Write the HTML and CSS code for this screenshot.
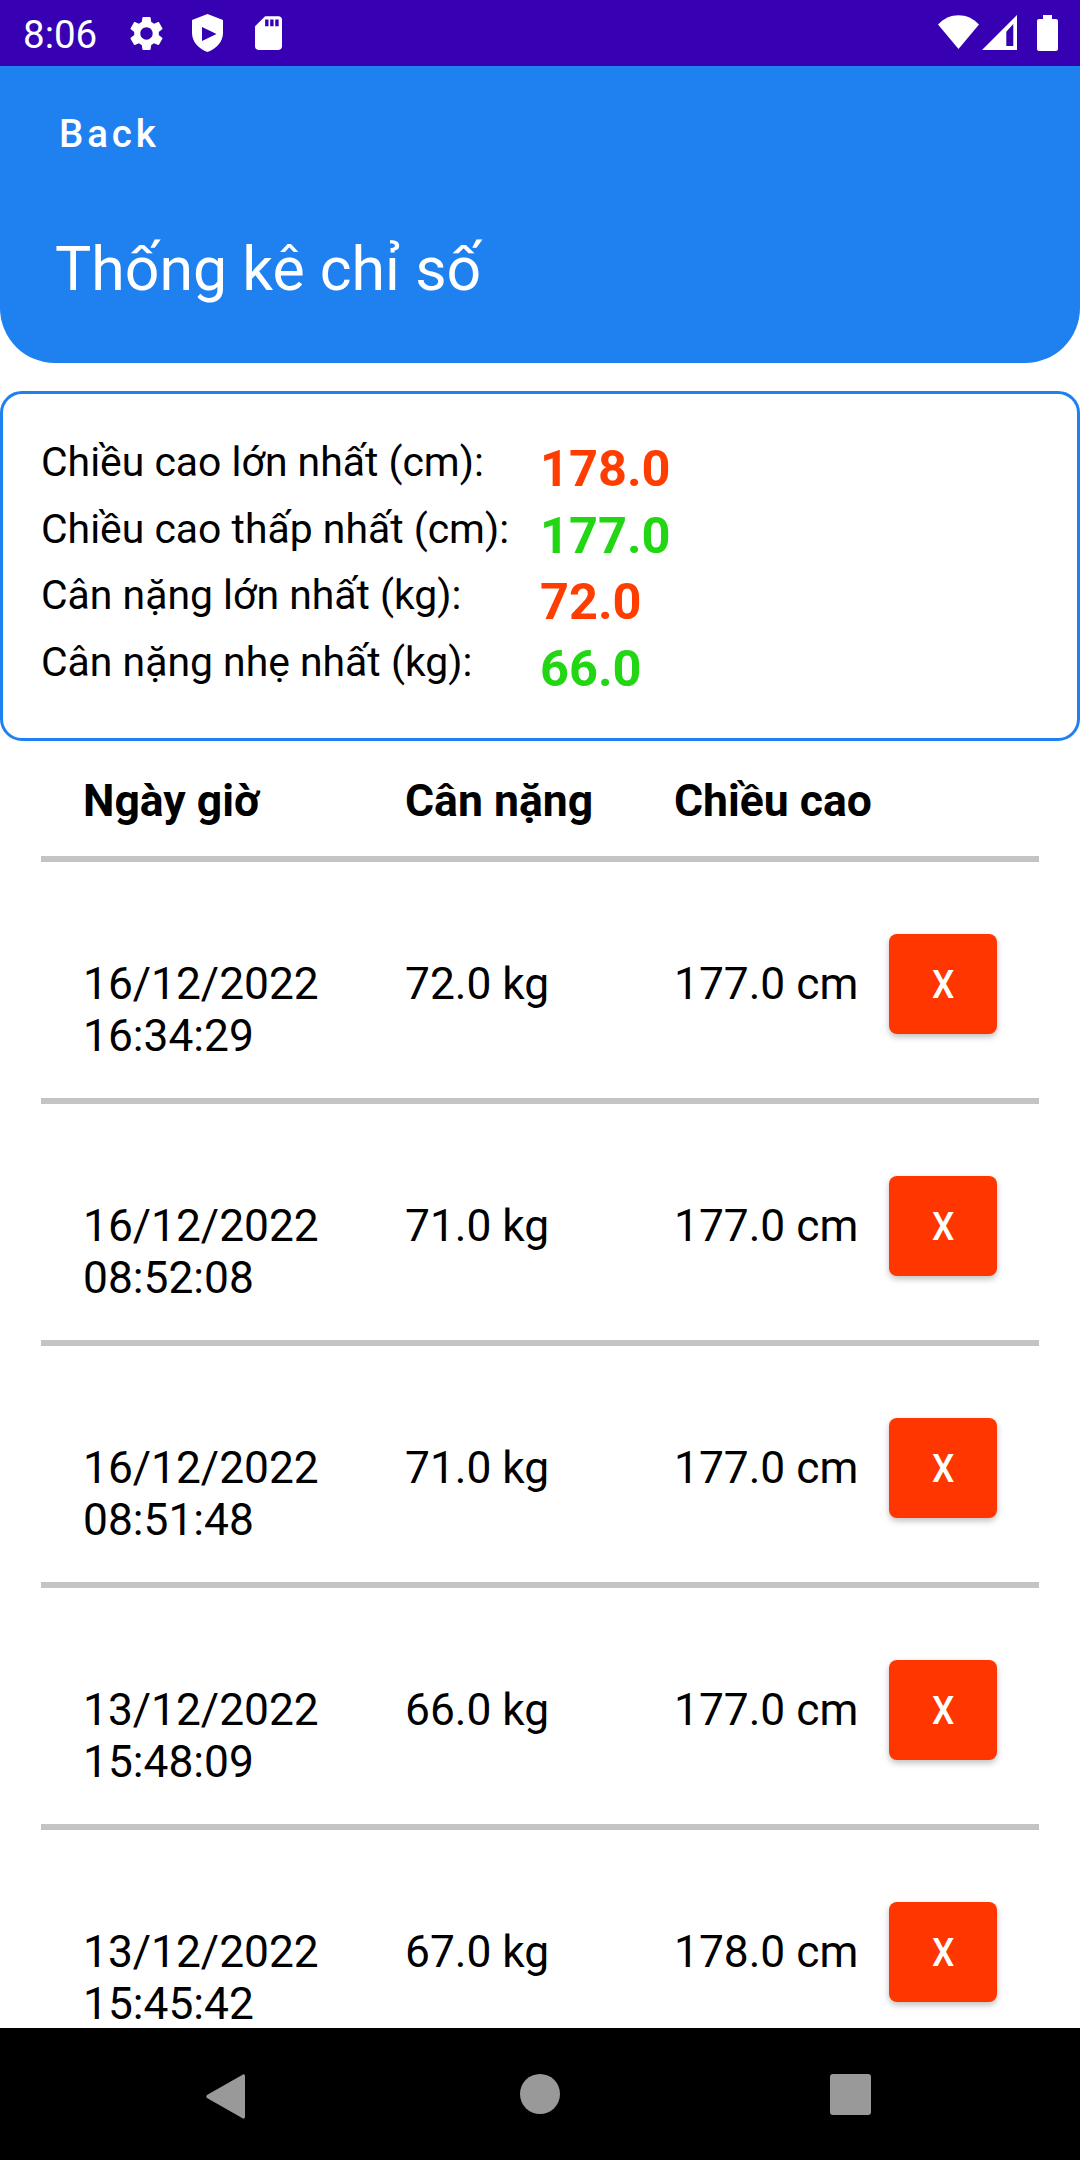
FILE: index.html
```html
<!DOCTYPE html>
<html lang="vi">
<head>
<meta charset="utf-8">
<title>Thống kê chỉ số</title>
<link rel="stylesheet" href="styles.css">
</head>
<body>
<div class="phone">
  <div class="status">
    <span class="time">8:06</span>
    <svg class="ic-gear" viewBox="2.5 1.8 19 20.4"><path d="M19.14 12.94c.04-.3.06-.61.06-.94 0-.32-.02-.64-.07-.94l2.03-1.58c.18-.14.23-.41.12-.61l-1.92-3.32c-.12-.22-.37-.29-.59-.22l-2.39.96c-.5-.38-1.03-.7-1.62-.94l-.36-2.54c-.04-.24-.24-.41-.48-.41h-3.84c-.24 0-.43.17-.47.41l-.36 2.54c-.59.24-1.13.57-1.62.94l-2.39-.96c-.22-.08-.47 0-.59.22L2.74 8.87c-.12.21-.08.47.12.61l2.03 1.58c-.05.3-.09.63-.09.94s.02.64.07.94l-2.03 1.58c-.18.14-.23.41-.12.61l1.92 3.32c.12.22.37.29.59.22l2.39-.96c.5.38 1.03.7 1.62.94l.36 2.54c.05.24.24.41.48.41h3.84c.24 0 .44-.17.47-.41l.36-2.54c.59-.24 1.13-.56 1.62-.94l2.39.96c.22.08.47 0 .59-.22l1.92-3.32c.12-.22.07-.47-.12-.61l-2.01-1.58zM12 15.6c-1.98 0-3.6-1.62-3.6-3.6s1.62-3.6 3.6-3.6 3.6 1.62 3.6 3.6-1.62 3.6-3.6 3.6z"/></svg>
    <svg class="ic-shield" viewBox="0 0 31 38"><path fill-rule="evenodd" d="M15.5 0 L31 6 V19 C31 28 24 35 15.5 38 C7 35 0 28 0 19 V6 Z M10 13 V27 L24.5 20 Z"/></svg>
    <svg class="ic-sd" viewBox="4 2 16 20"><path d="M18 2h-8L4.02 8 4 20c0 1.1.9 2 2 2h12c1.1 0 2-.9 2-2V4c0-1.1-.9-2-2-2zm-6 6h-2V4h2v4zm3 0h-2V4h2v4zm3 0h-2V4h2v4z"/></svg>
    <span class="status-space"></span>
    <svg class="ic-wifi" viewBox="0 0 41 34"><path d="M0 9.5 C11 -3 30 -3 41 9.5 L20.5 34 Z"/></svg>
    <svg class="ic-signal" viewBox="0 0 35 35"><path fill-rule="evenodd" d="M35 0 V35 H0 Z M31.3 9 L24.3 16.7 V31 H31.3 Z"/></svg>
    <svg class="ic-battery" viewBox="0 0 21 36"><path d="M6 0 H15 V4 H19 C20.1 4 21 4.9 21 6 V34 C21 35.1 20.1 36 19 36 H2 C0.9 36 0 35.1 0 34 V6 C0 4.900 0.900 4 2 4 H6 Z"/></svg>
  </div>

  <header class="appbar">
    <div class="back">Back</div>
    <h1 class="title">Thống kê chỉ số</h1>
  </header>

  <section class="summary">
    <div class="s-label">Chiều cao lớn nhất (cm):</div><div class="s-value high">178.0</div>
    <div class="s-label">Chiều cao thấp nhất (cm):</div><div class="s-value low">177.0</div>
    <div class="s-label">Cân nặng lớn nhất (kg):</div><div class="s-value high">72.0</div>
    <div class="s-label">Cân nặng nhẹ nhất (kg):</div><div class="s-value low">66.0</div>
  </section>

  <main class="table">
    <div class="thead">
      <div>Ngày giờ</div><div>Cân nặng</div><div>Chiều cao</div>
    </div>
    <div class="row">
      <div class="cell">16/12/2022<br>16:34:29</div><div class="cell">72.0 kg</div><div class="cell">177.0 cm</div><div class="del"><span class="del-x">X</span></div>
    </div>
    <div class="row">
      <div class="cell">16/12/2022<br>08:52:08</div><div class="cell">71.0 kg</div><div class="cell">177.0 cm</div><div class="del"><span class="del-x">X</span></div>
    </div>
    <div class="row">
      <div class="cell">16/12/2022<br>08:51:48</div><div class="cell">71.0 kg</div><div class="cell">177.0 cm</div><div class="del"><span class="del-x">X</span></div>
    </div>
    <div class="row">
      <div class="cell">13/12/2022<br>15:48:09</div><div class="cell">66.0 kg</div><div class="cell">177.0 cm</div><div class="del"><span class="del-x">X</span></div>
    </div>
    <div class="row">
      <div class="cell">13/12/2022<br>15:45:42</div><div class="cell">67.0 kg</div><div class="cell">178.0 cm</div><div class="del"><span class="del-x">X</span></div>
    </div>
  </main>

  <nav class="navbar">
    <svg class="nav-back" viewBox="0 0 39 45"><path d="M37 0.500 C38 0 39 1 39 2 V43 C39 44 38 45 37 44.500 L1 24 C0 23 0 22 1 21 Z"/></svg>
    <svg class="nav-home" viewBox="0 0 40 40"><circle cx="20" cy="20" r="20"/></svg>
    <svg class="nav-recent" viewBox="0 0 41 41"><rect width="41" height="41" rx="3"/></svg>
  </nav>
</div>
</body>
</html>
```

FILE: styles.css
```css
* { box-sizing: border-box; }
html, body { margin: 0; padding: 0; }
body { font-family: Roboto, "Noto Sans", sans-serif; background: #fff; color: #000; }

.phone { width: 1080px; height: 2160px; display: flex; flex-direction: column; overflow: hidden; background: #fff; }

.status { height: 66px; flex: none; background: #3700b3; color: #fff; display: flex; align-items: flex-start; padding-left: 23px; }
.status svg { fill: #fff; flex: none; display: block; }
.time { font-size: 38.5px; line-height: 45px; margin-top: 12px; width: 73px; white-space: nowrap; }
.ic-gear { width: 33px; height: 35px; margin: 16px 0 0 34px; }
.ic-shield { width: 31px; height: 38px; margin: 14px 0 0 29px; }
.ic-sd { width: 27px; height: 34px; margin: 16px 0 0 32px; }
.status-space { flex: 1; }
.ic-wifi { width: 41px; height: 34px; margin-top: 15px; }
.ic-signal { width: 35px; height: 35px; margin: 15px 0 0 3px; }
.ic-battery { width: 21px; height: 36px; margin: 15px 22px 0 20px; }

.appbar { height: 297px; flex: none; background: #1f80f0; color: #fff; border-radius: 0 0 55px 55px; padding: 45px 0 0 55px; }
.back { font-size: 38.5px; line-height: 45px; font-weight: 500; letter-spacing: 3.9px; margin-left: 4px; }
.title { margin: 78px 0 0; font-size: 60.8px; line-height: 71px; font-weight: 400; }

.summary { flex: none; margin-top: 28px; height: 350px; border: 3px solid #1f80f0; border-radius: 22px; padding: 45px 0 0 38px; display: grid; grid-template-columns: 499px 1fr; grid-auto-rows: 66.7px; }
.s-label { font-size: 40.9px; line-height: 48px; margin-top: -1px; white-space: nowrap; }
.s-value { font-size: 50.5px; line-height: 59px; font-weight: 700; }
.high { color: #ff3d00; }
.low { color: #22d614; }

.table { flex: 1; min-height: 0; overflow: hidden; padding: 0 41px; }
.thead { height: 121px; border-bottom: 6px solid #c4c4c4; padding: 34px 0 0 42px; display: grid; grid-template-columns: 322px 269px 1fr; font-size: 44.5px; line-height: 52px; font-weight: 700; }
.row { height: 242px; border-bottom: 6px solid #c4c4c4; padding: 72px 0 0 42px; display: grid; grid-template-columns: 322px 269px 215px 108px; align-items: start; }
.cell { font-size: 44.3px; line-height: 52px; padding-top: 24px; white-space: nowrap; }
.del { height: 100px; background: #ff3600; color: #fff; border-radius: 8px; box-shadow: 0 3px 6px rgba(0,0,0,.25); font-size: 38.5px; font-weight: 500; display: flex; align-items: center; justify-content: center; }
.del-x { display: block; transform: scaleX(.92); }

.navbar { height: 132px; flex: none; background: #000; display: flex; align-items: flex-start; padding-top: 46px; }
.navbar svg { fill: #999; display: block; flex: none; }
.nav-back { width: 39px; height: 45px; margin: 0 0 0 206px; }
.nav-home { width: 40px; height: 40px; margin: 0 0 0 275px; }
.nav-recent { width: 41px; height: 41px; margin: 0 0 0 270px; }
```
